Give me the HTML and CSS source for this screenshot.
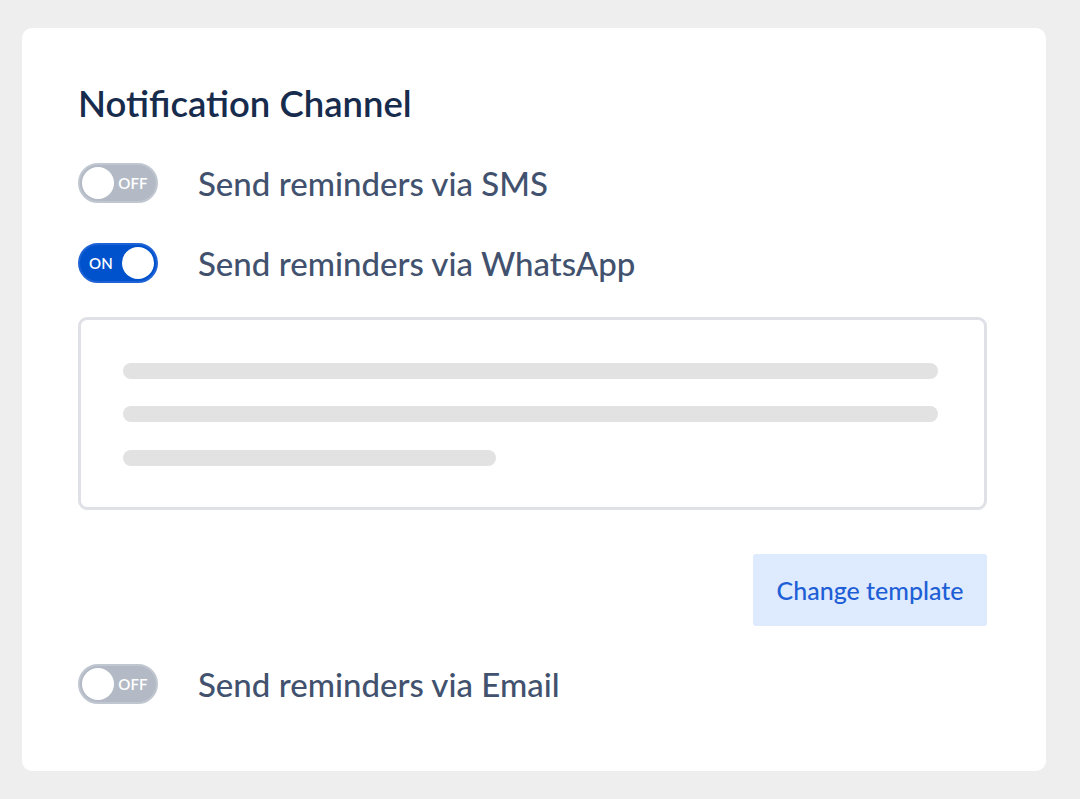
FILE: index.html
```html
<!DOCTYPE html>
<html>
<head>
<meta charset="utf-8">
<link rel="stylesheet" href="styles.css">
</head>
<body>
<div class="card">
  <h1 class="title">Notification Channel</h1>
  <div class="row row-first">
    <span class="toggle off"><span class="knob"></span><span class="tlabel">OFF</span></span>
    <span class="label">Send reminders via SMS</span>
  </div>
  <div class="row">
    <span class="toggle on"><span class="tlabel">ON</span><span class="knob"></span></span>
    <span class="label">Send reminders via WhatsApp</span>
  </div>
  <div class="template">
    <div class="line"></div>
    <div class="line line2"></div>
    <div class="line line3"></div>
  </div>
  <div class="actions">
    <button class="btn">Change template</button>
  </div>
  <div class="row row-email">
    <span class="toggle off"><span class="knob"></span><span class="tlabel">OFF</span></span>
    <span class="label">Send reminders via Email</span>
  </div>
</div>
</body>
</html>
```
FILE: styles.css
```css
html, body {
  margin: 0;
  padding: 0;
  background: #eeeeee;
}
body {
  padding: 28px 34px 28px 22px;
  font-family: "Lato", "Noto Sans", sans-serif;
}
.card {
  background: #ffffff;
  border-radius: 10px;
  height: 743px;
  box-sizing: border-box;
  padding: 55px 59px 0 56px;
  display: flex;
  flex-direction: column;
}
.title {
  margin: 0;
  font-size: 36.5px;
  line-height: 40px;
  font-weight: 600;
  color: #172B4D;
  padding-left: 0;
}
.row {
  display: flex;
  align-items: center;
  height: 40px;
  margin-top: 40px;
}
.toggle {
  box-sizing: border-box;
  width: 80px;
  height: 40px;
  border-radius: 20px;
  padding: 2px;
  display: flex;
  align-items: center;
  flex-shrink: 0;
}
.toggle.off {
  background: #B3BAC5;
  border: 2px solid #C1C7D0;
}
.toggle.on {
  background: #0052CC;
  border: 2px solid #1E63D6;
}
.knob {
  width: 32px;
  height: 32px;
  border-radius: 50%;
  background: #ffffff;
}
.tlabel {
  color: #ffffff;
  font-size: 15px;
  font-weight: 600;
  flex: 1;
  text-align: center;
  letter-spacing: 0.2px;
}
.toggle.off .tlabel { padding-right: 2px; }
.toggle.on .tlabel { padding-right: 2px; }
.label {
  margin-left: 40px;
  font-size: 33px;
  font-weight: 500;
  color: #42526E;
}
.template {
  margin-top: 34px;
  height: 193px;
  box-sizing: border-box;
  border: 3px solid #DFE1E6;
  border-radius: 9px;
  padding: 43px 46px 0 42px;
}
.line {
  height: 16px;
  border-radius: 8px;
  background: #E2E2E2;
}
.line2 { margin-top: 27px; }
.line3 { margin-top: 28px; width: 373px; }
.actions {
  display: flex;
  justify-content: flex-end;
  margin-top: 44px;
}
.btn {
  width: 234px;
  height: 72px;
  border: none;
  border-radius: 3px;
  background: #DEEBFF;
  color: #1F5FD6;
  font-family: "Lato", "Noto Sans", sans-serif;
  font-size: 25px;
  font-weight: 500;
  padding: 0;
}
.row-email { margin-top: 38px; }
```
